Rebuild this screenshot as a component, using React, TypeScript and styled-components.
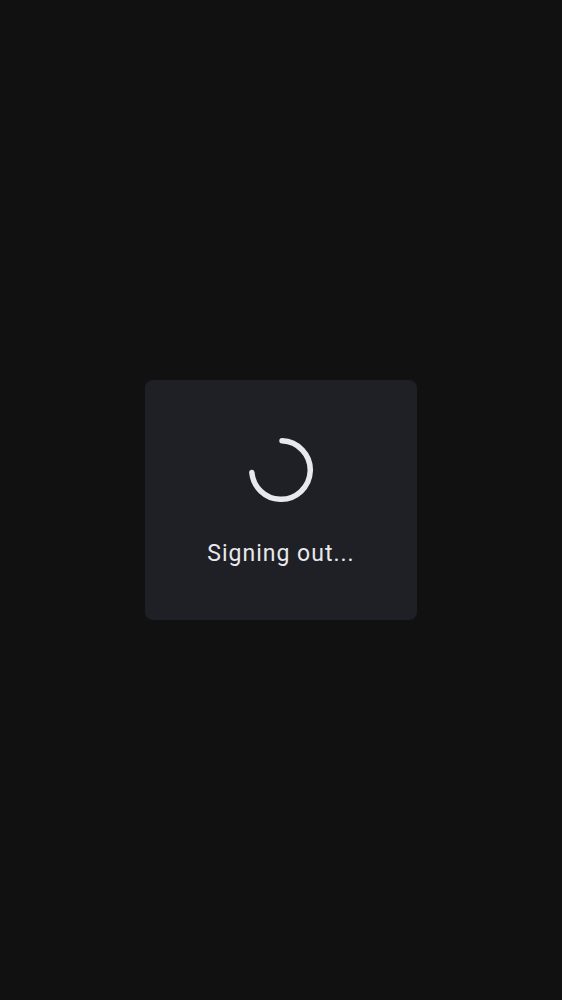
import React from "react";
import styled, { createGlobalStyle } from "styled-components";

const Global = createGlobalStyle`
  html, body { margin: 0; padding: 0; background: #111112; }
  body { font-family: Roboto, "Noto Sans", sans-serif; }
  #root { min-height: 100vh; }
`;

const Page = styled.div`
  width: 100%;
  min-height: 100vh;
  display: flex;
  align-items: center;
  justify-content: center;
  background: #111112;
`;

const Card = styled.div`
  width: 272px;
  height: 240px;
  box-sizing: border-box;
  padding-top: 58px;
  background: #1f2025;
  border-radius: 8px;
  display: flex;
  flex-direction: column;
  align-items: center;
`;

const Spinner = styled.svg`
  width: 64px;
  height: 64px;
  display: block;
`;

const Label = styled.div`
  margin-top: 36.5px;
  font-size: 23px;
  line-height: 30px;
  color: #e8e9ed;
  letter-spacing: 1px;
`;

export default function App() {
  const r = 29.25;
  const c = 2 * Math.PI * r;
  const arc = c * 0.73;
  return (
    <>
      <Global />
      <Page>
        <Card role="status">
          <Spinner viewBox="0 0 64 64" aria-hidden="true">
            <circle
              cx="32"
              cy="32"
              r={r}
              fill="none"
              stroke="#e8e9ee"
              strokeWidth="5.5"
              strokeLinecap="round"
              strokeDasharray={`${arc} ${c}`}
              transform="rotate(-88 32 32)"
            />
          </Spinner>
          <Label>Signing out...</Label>
        </Card>
      </Page>
    </>
  );
}
